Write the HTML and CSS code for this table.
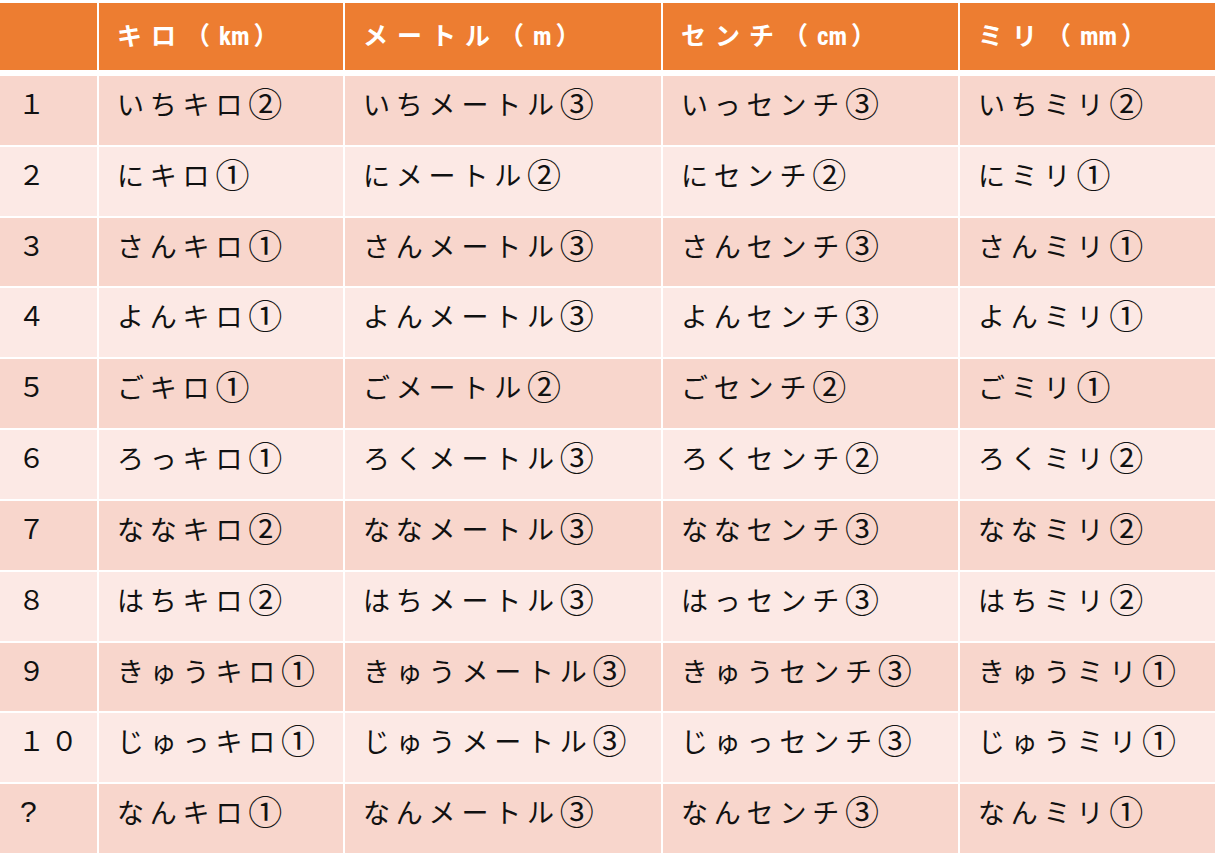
FILE: index.html
```html
<!DOCTYPE html>
<html lang="ja">
<head>
<meta charset="utf-8">
<title>単位の読み方</title>
<link rel="stylesheet" href="styles.css">
</head>
<body>
<div class="table">
  <div class="row head">
    <div class="cell"></div>
    <div class="cell">キロ（<span class="lat">km</span>）</div>
    <div class="cell">メートル（<span class="lat">m</span>）</div>
    <div class="cell">センチ（<span class="lat">cm</span>）</div>
    <div class="cell">ミリ（<span class="lat">mm</span>）</div>
  </div>
  <div class="body">
    <div class="row odd"><div class="cell">１</div><div class="cell">いちキロ<span class="c">②</span></div><div class="cell">いちメートル<span class="c">③</span></div><div class="cell">いっセンチ<span class="c">③</span></div><div class="cell">いちミリ<span class="c">②</span></div></div>
    <div class="row even"><div class="cell">２</div><div class="cell">にキロ<span class="c">①</span></div><div class="cell">にメートル<span class="c">②</span></div><div class="cell">にセンチ<span class="c">②</span></div><div class="cell">にミリ<span class="c">①</span></div></div>
    <div class="row odd"><div class="cell">３</div><div class="cell">さんキロ<span class="c">①</span></div><div class="cell">さんメートル<span class="c">③</span></div><div class="cell">さんセンチ<span class="c">③</span></div><div class="cell">さんミリ<span class="c">①</span></div></div>
    <div class="row even"><div class="cell">４</div><div class="cell">よんキロ<span class="c">①</span></div><div class="cell">よんメートル<span class="c">③</span></div><div class="cell">よんセンチ<span class="c">③</span></div><div class="cell">よんミリ<span class="c">①</span></div></div>
    <div class="row odd"><div class="cell">５</div><div class="cell">ごキロ<span class="c">①</span></div><div class="cell">ごメートル<span class="c">②</span></div><div class="cell">ごセンチ<span class="c">②</span></div><div class="cell">ごミリ<span class="c">①</span></div></div>
    <div class="row even"><div class="cell">６</div><div class="cell">ろっキロ<span class="c">①</span></div><div class="cell">ろくメートル<span class="c">③</span></div><div class="cell">ろくセンチ<span class="c">②</span></div><div class="cell">ろくミリ<span class="c">②</span></div></div>
    <div class="row odd"><div class="cell">７</div><div class="cell">ななキロ<span class="c">②</span></div><div class="cell">ななメートル<span class="c">③</span></div><div class="cell">ななセンチ<span class="c">③</span></div><div class="cell">ななミリ<span class="c">②</span></div></div>
    <div class="row even"><div class="cell">８</div><div class="cell">はちキロ<span class="c">②</span></div><div class="cell">はちメートル<span class="c">③</span></div><div class="cell">はっセンチ<span class="c">③</span></div><div class="cell">はちミリ<span class="c">②</span></div></div>
    <div class="row odd"><div class="cell">９</div><div class="cell">きゅうキロ<span class="c">①</span></div><div class="cell">きゅうメートル<span class="c">③</span></div><div class="cell">きゅうセンチ<span class="c">③</span></div><div class="cell">きゅうミリ<span class="c">①</span></div></div>
    <div class="row even"><div class="cell">１０</div><div class="cell">じゅっキロ<span class="c">①</span></div><div class="cell">じゅうメートル<span class="c">③</span></div><div class="cell">じゅっセンチ<span class="c">③</span></div><div class="cell">じゅうミリ<span class="c">①</span></div></div>
    <div class="row odd"><div class="cell"><span class="q">?</span></div><div class="cell">なんキロ<span class="c">①</span></div><div class="cell">なんメートル<span class="c">③</span></div><div class="cell">なんセンチ<span class="c">③</span></div><div class="cell">なんミリ<span class="c">①</span></div></div>
  </div>
</div>
</body>
</html>
```
FILE: styles.css
```css
html, body {
  margin: 0;
  padding: 0;
  background: #ffffff;
}

body {
  font-family: "Noto Sans CJK JP", "Noto Sans", sans-serif;
  color: #111111;
}

.table {
  width: 1215px;
  padding-top: 3px;
  background: #ffffff;
}

.row {
  display: grid;
  grid-template-columns: 97px 244px 316px 295px 255px;
  column-gap: 2px;
}

.head {
  height: 67px;
  margin-bottom: 6px;
}

.head .cell {
  background: #ed7d31;
  color: #ffffff;
  font-weight: 700;
  font-size: 25px;
  letter-spacing: 9px;
  line-height: 28px;
  padding: 17px 0 0 18px;
}

.lat {
  font-family: "Liberation Sans Narrow", "Roboto Condensed", "Liberation Sans", sans-serif;
  font-weight: 700;
  font-size: 25px;
  letter-spacing: 0;
  margin-right: 4px;
}

.body {
  display: grid;
  grid-template-rows: repeat(11, 1fr);
  row-gap: 2px;
  height: 777px;
}

.cell {
  box-sizing: border-box;
  font-size: 27px;
  line-height: 28px;
  letter-spacing: 5.8px;
  padding: 13px 0 0 18px;
  white-space: nowrap;
  overflow: hidden;
}

.c {
  font-family: "Noto Sans CJK JP", sans-serif;
  font-size: 34px;
  letter-spacing: 0;
  vertical-align: -2px;
}

.odd .cell {
  background: #f8d6cc;
}

.even .cell {
  background: #fce9e5;
}

.q {
  font-family: "Liberation Sans", sans-serif;
  font-size: 30px;
  letter-spacing: 0;
  margin-left: 2px;
}
```
